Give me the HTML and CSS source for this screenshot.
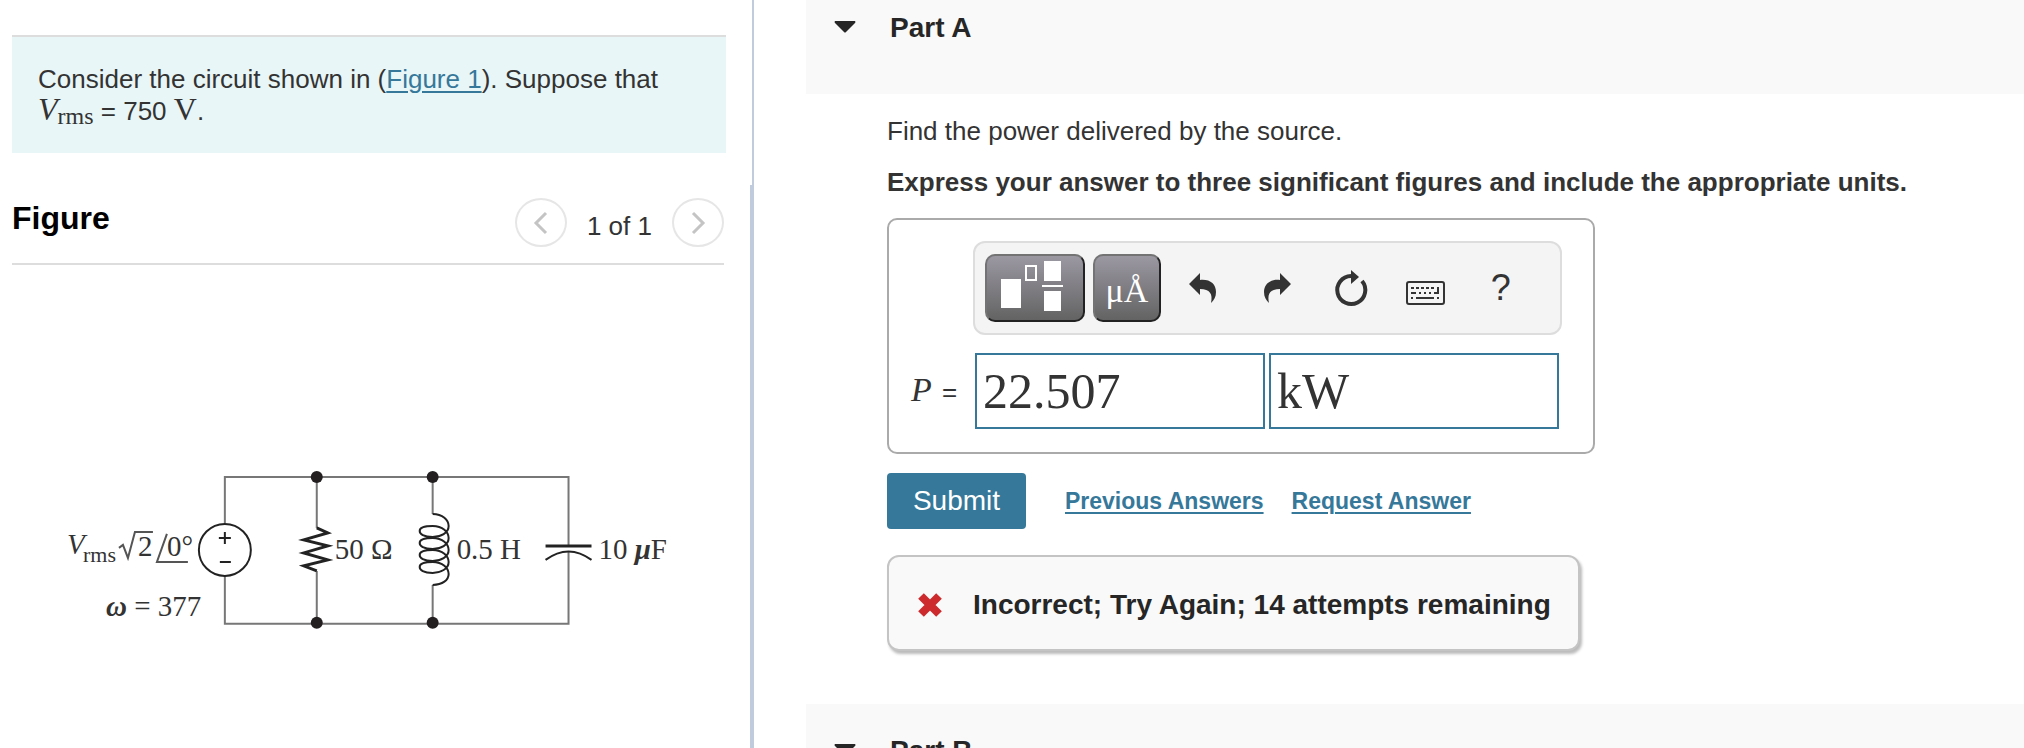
FILE: index.html
```html
<!DOCTYPE html>
<html lang="en">
<head>
    <meta charset="UTF-8">
    <meta name="viewport" content="width=device-width, initial-scale=1.0">
    <title>Circuit Power Problem</title>
    <link rel="stylesheet" href="styles.css">
</head>
<body>

    <div class="page">
        <div class="left-pane">
            <section class="intro">
                <div class="problem">
                    Consider the circuit shown in (<a href="#figure">Figure 1</a>). Suppose that<br>
                    <span class="math"><i>V</i><span class="subscript">rms</span></span> = 750 <span class="math">V</span>.
                </div>
            </section>

            <section class="figure" id="figure">
                <div class="figure-header">
                    <h2>Figure</h2>
                    <div class="pager">
                        <button type="button" class="pager-button" aria-label="Previous figure">
                            <svg width="16" height="24" viewBox="0 0 16 24"><path d="M13 2 L3 12 L13 22"/></svg>
                        </button>
                        <span class="pager-text">1 of 1</span>
                        <button type="button" class="pager-button" aria-label="Next figure">
                            <svg width="16" height="24" viewBox="0 0 16 24"><path d="M3 2 L13 12 L3 22"/></svg>
                        </button>
                    </div>
                </div>

                <svg class="circuit" viewBox="60 460 620 180" role="img" aria-label="Parallel RLC circuit">
                    <!-- wires -->
                    <g class="wire">
                        <path d="M225 523 V477 H569 V546"/>
                        <path d="M225 576 V624 H569 V552"/>
                        <path d="M317 477 V528 M317 571 V624"/>
                        <path d="M433 477 V514 M433 585 V624"/>
                    </g>
                    <!-- components -->
                    <g class="part">
                        <circle cx="225" cy="550" r="26"/>
                        <path d="M219 538 H231 M225 532 V544 M220 562 H231"/>
                        <path class="resistor" d="M317 528 L328 533 L304 540 L328 546 L304 553 L328 560 L304 566 L317 571"/>
                        <path d="M433 514 C443 514 449 520 449 526 C449 533 441 537 433 537 C424 537 420 534 420 531 C420 528 424 526 433 526 C443 526 449 532 449 538 C449 545 441 549 433 549 C424 549 420 546 420 543 C420 540 424 538 433 538 C443 538 449 544 449 550 C449 557 441 561 433 561 C424 561 420 558 420 555 C420 552 424 550 433 550 C443 550 449 556 449 562 C449 569 441 573 433 573 C424 573 420 570 420 567 C420 564 424 562 433 562 C443 562 449 568 449 574 C449 580 443 585 433 585"/>
                        <path class="plate" d="M546 546 H592"/>
                        <path d="M546 560 Q569 543 592 560"/>
                    </g>
                    <g class="node">
                        <circle cx="317" cy="477" r="6"/>
                        <circle cx="433" cy="477" r="6"/>
                        <circle cx="317" cy="623" r="6"/>
                        <circle cx="433" cy="623" r="6"/>
                    </g>
                    <!-- labels -->
                    <g class="label">
                        <text x="67" y="554" font-style="italic">V</text>
                        <text x="83" y="562" class="small">rms</text>
                        <text x="138" y="556">2</text>
                        <text x="167" y="556">0°</text>
                        <text x="106" y="616"><tspan class="greek">ω</tspan> = 377</text>
                        <text x="335" y="559">50 Ω</text>
                        <text x="457" y="559">0.5 H</text>
                        <text x="599" y="559">10 <tspan class="greek">μ</tspan>F</text>
                    </g>
                    <path class="sign" d="M119 548 L123 545 L128 558 L135 532 H153 M167 534 L157 562 H188"/>
                </svg>
            </section>
        </div>

        <main class="right-pane">
            <section>
                <header class="part-header">
                    <svg class="arrow" width="22" height="12" viewBox="0 0 22 12"><path d="M1 0 H21 Q22 1 21 2 L12 11 Q11 12 10 11 L1 2 Q0 1 1 0"/></svg>
                    <h2>Part A</h2>
                </header>

                <form class="part-body">
                    <p>Find the power delivered by the source.</p>
                    <p class="instruction">Express your answer to three significant figures and include the appropriate units.</p>

                    <div class="answer-box">
                        <div class="toolbar">
                            <button type="button" class="dark-button template-button" aria-label="Templates">
                                <svg width="68" height="52" viewBox="0 0 68 52">
                                    <rect x="0" y="18" width="20" height="29"/>
                                    <rect class="outline" x="25" y="5" width="10" height="14"/>
                                    <rect x="43" y="0" width="17" height="20"/>
                                    <rect x="41" y="24" width="21" height="2"/>
                                    <rect x="43" y="30" width="17" height="20"/>
                                </svg>
                            </button>
                            <button type="button" class="dark-button units-button" aria-label="Symbols">μÅ</button>
                            <button type="button" class="tool" aria-label="Undo">
                                <svg width="48" height="48" viewBox="0 0 48 48"><path d="M11 20 L22 9 V16 C32 15 38 20 38 28 C38 33 36 36 33 39 C35 30 32 25 22 25 V31 Z"/></svg>
                            </button>
                            <button type="button" class="tool" aria-label="Redo">
                                <svg width="48" height="48" viewBox="0 0 48 48"><path d="M38 20 L27 9 V16 C17 15 11 20 11 28 C11 33 13 36 16 39 C14 30 17 25 27 25 V31 Z"/></svg>
                            </button>
                            <button type="button" class="tool" aria-label="Reset">
                                <svg width="48" height="48" viewBox="0 0 48 48"><path class="ring" d="M24 12 A14 14 0 1 0 35 17"/><path d="M24 6 L32 13 L24 20 Z"/></svg>
                            </button>
                            <button type="button" class="tool" aria-label="Keyboard shortcuts">
                                <svg width="48" height="48" viewBox="0 0 48 48">
                                    <rect class="case" x="5" y="18" width="37" height="22" rx="2"/>
                                    <path d="M9 23 h3 v2 h-3 z M14 23 h3 v2 h-3 z M19 23 h3 v2 h-3 z M24 23 h3 v2 h-3 z M29 23 h3 v2 h-3 z M35 23 h2 v7 h-5 v-2 h3 z"/>
                                    <path d="M9 28 h5 v2 h-5 z M17 28 h2 v2 h-2 z M22 28 h2 v2 h-2 z M27 28 h2 v2 h-2 z"/>
                                    <path d="M9 33 h2 v2 h-2 z M14 33 h18 v2 h-18 z M35 33 h2 v2 h-2 z"/>
                                </svg>
                            </button>
                            <button type="button" class="tool help" aria-label="Help">?</button>
                        </div>
                        <div class="answer-row">
                            <label for="value"><i>P</i> =</label>
                            <input type="text" id="value" value="22.507">
                            <input type="text" id="units" value="kW" aria-label="Units">
                        </div>
                    </div>

                    <div class="actions">
                        <button type="submit" class="submit">Submit</button>
                        <a href="#previous">Previous Answers</a>
                        <a href="#request">Request Answer</a>
                    </div>

                    <div class="feedback" role="status">
                        <svg width="28" height="28" viewBox="0 0 28 28"><path d="M5 5 L23 23 M23 5 L5 23"/></svg>
                        Incorrect; Try Again; 14 attempts remaining
                    </div>
                </form>
            </section>

            <section>
                <header class="part-header next">
                    <svg class="arrow" width="22" height="12" viewBox="0 0 22 12"><path d="M1 0 H21 Q22 1 21 2 L12 11 Q11 12 10 11 L1 2 Q0 1 1 0"/></svg>
                    <h2>Part B</h2>
                </header>
            </section>
        </main>
    </div>

</body>
</html>
```

FILE: styles.css
```css
/* Global Styles */
* {
    box-sizing: border-box;
}

body {
    font-family: "Liberation Sans", Arial, sans-serif;
    font-size: 26px;
    line-height: 32px;
    color: #333;
    background: white;
    margin: 0;
}

h2, p {
    margin: 0;
}

button {
    font-family: inherit;
    cursor: pointer;
}

a {
    color: #36789a;
    text-decoration-thickness: 2px;
    text-underline-offset: 3px;
}

.page {
    display: grid;
    grid-template-columns: 754fr 1270fr;
    height: 100vh;
    overflow: hidden;
}

/* Left Pane */
.left-pane {
    display: flex;
    flex-direction: column;
}

.intro {
    padding: 35px 26px 32px 12px;
    border-right: 2px solid #c0cbdd;
}

.problem {
    background: #e8f6f7;
    border-top: 2px solid #ddd;
    padding: 26px 26px 26px;
    min-height: 118px;
}

.math {
    font-family: "Liberation Serif", "Times New Roman", serif;
    font-size: 32px;
    line-height: 1px;
}

.subscript {
    font-size: 24px;
    vertical-align: -4px;
}

.figure {
    flex: 1;
    padding: 13px 26px 0 12px;
    border-right: 4px solid #c0cbdd;
}

.figure-header {
    display: flex;
    justify-content: space-between;
    height: 67px;
    border-bottom: 2px solid #ddd;
}

.figure-header h2 {
    font-size: 32px;
    line-height: 40px;
    color: black;
}

.pager {
    display: flex;
    gap: 20px;
}

.pager-button {
    display: flex;
    align-items: center;
    justify-content: center;
    width: 52px;
    height: 49px;
    padding: 0;
    background: white;
    border: 2px solid #e6e6e6;
    border-radius: 50%;
}

.pager-button path {
    fill: none;
    stroke: #c4c4c4;
    stroke-width: 3;
}

.pager-text {
    padding-top: 12px;
}

/* Circuit Drawing */
.circuit {
    display: block;
    width: 87%;
    margin: 195px 0 0 48px;
}

.wire {
    fill: none;
    stroke: #777;
    stroke-width: 2;
}

.part {
    fill: none;
    stroke: #222;
    stroke-width: 2;
}

.plate, .resistor {
    stroke-width: 3;
}

.node {
    fill: #231f20;
}

.label {
    font-family: "Liberation Serif", "Times New Roman", serif;
    font-size: 29px;
    fill: #333;
}

.small {
    font-size: 22px;
}

.greek {
    font-style: italic;
    font-weight: bold;
}

.sign {
    fill: none;
    stroke: #555;
    stroke-width: 2;
}

/* Right Pane */
.right-pane {
    padding-left: 52px;
}

.part-header {
    display: flex;
    gap: 34px;
    height: 94px;
    padding: 12px 28px;
    background: #f9f9f9;
    color: #262626;
}

.part-header.next {
    padding-top: 31px;
}

.part-header h2 {
    font-size: 28px;
    line-height: 32px;
}

.arrow {
    margin-top: 9px;
    fill: #262626;
}

.part-body {
    padding: 21px 20px 53px 81px;
}

.instruction {
    font-weight: bold;
    margin: 19px 0 20px;
}

/* Answer Box */
.answer-box {
    width: 708px;
    max-width: 100%;
    border: 2px solid #aaa;
    border-radius: 10px;
    padding: 21px 31px 23px 22px;
}

.toolbar {
    display: flex;
    align-items: center;
    height: 94px;
    margin-left: 62px;
    padding: 0 22px 0 10px;
    background: #f4f4f4;
    border: 2px solid #ddd;
    border-radius: 12px;
}

.dark-button {
    height: 68px;
    padding: 0;
    color: white;
    background: linear-gradient(#9b98a2, #636363);
    border: 2px solid;
    border-color: #737373 #222 #222 #737373;
    border-radius: 10px;
}

.template-button {
    width: 100px;
    margin-right: 8px;
}

.template-button svg {
    display: block;
    margin: 0 auto 2px;
    fill: white;
}

.template-button .outline {
    fill: none;
    stroke: white;
    stroke-width: 2;
}

.units-button {
    width: 68px;
    margin-right: 4px;
    padding-top: 6px;
    font-family: "Liberation Serif", "Times New Roman", serif;
    font-size: 34px;
}

.tool {
    display: flex;
    align-items: center;
    justify-content: center;
    flex: 1;
    height: 68px;
    padding: 0;
    color: #333;
    background: none;
    border: none;
}

.tool path {
    fill: #333;
}

.tool .ring, .tool .case {
    fill: none;
    stroke: #333;
    stroke-width: 4;
}

.tool .case {
    stroke-width: 2;
}

.help {
    font-size: 36px;
}

.answer-row {
    display: flex;
    align-items: center;
    gap: 4px;
    margin: 18px 3px 0 0;
}

.answer-row label {
    flex: 0 0 60px;
}

.answer-row i {
    margin-right: 3px;
    font-family: "Liberation Serif", "Times New Roman", serif;
    font-size: 34px;
}

.answer-row input {
    flex: 1;
    min-width: 0;
    height: 76px;
    padding: 0 6px;
    color: #333;
    font-family: "Liberation Serif", "Times New Roman", serif;
    font-size: 50px;
    border: 2px solid #36789a;
    outline: none;
}

/* Submit Row */
.actions {
    display: flex;
    align-items: center;
    gap: 28px;
    margin: 19px 0 26px;
    font-size: 23px;
    font-weight: bold;
}

.submit {
    width: 139px;
    height: 56px;
    margin-right: 11px;
    padding: 0;
    color: white;
    font-size: 28px;
    background: #36789a;
    border: none;
    border-radius: 4px;
}

/* Feedback */
.feedback {
    display: flex;
    align-items: center;
    gap: 29px;
    width: 693px;
    max-width: 100%;
    height: 96px;
    padding: 4px 20px 0 27px;
    color: #262626;
    font-size: 28px;
    font-weight: bold;
    background: #f9f9f9;
    border: 2px solid #c4c4c4;
    border-radius: 12px;
    box-shadow: 2px 3px 3px #bbb;
}

.feedback svg {
    flex: none;
}

.feedback path {
    stroke: #cc2a2d;
    stroke-width: 8;
}
```
